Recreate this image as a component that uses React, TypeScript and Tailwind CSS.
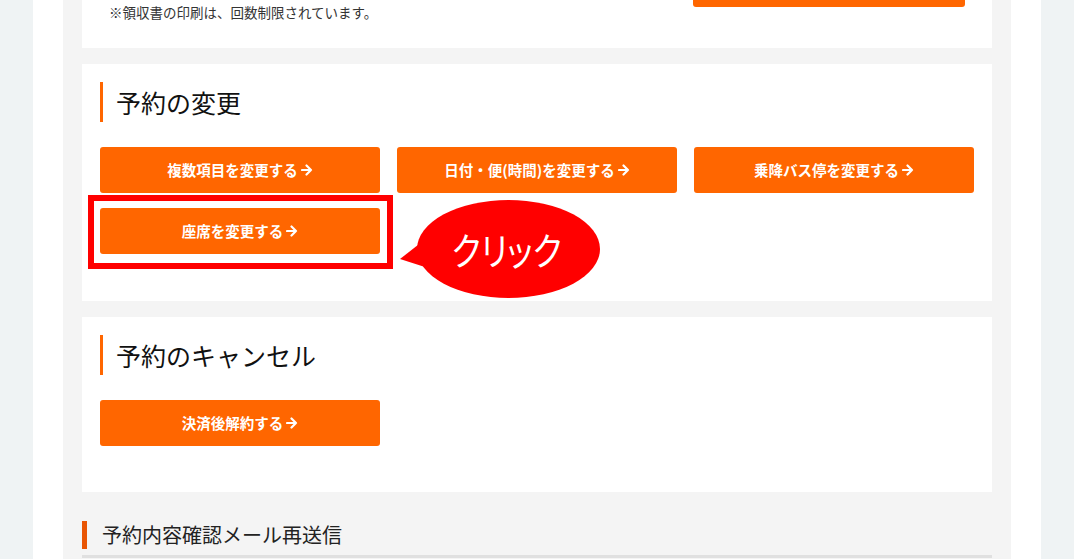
const jp = "font-['Noto_Sans_CJK_JP','Noto_Sans',sans-serif]";

const Arrow = () => (
  <svg width="12" height="12" viewBox="0 0 12 12" className="ml-[3px] shrink-0">
    <path
      d="M1 6h9M5.5 1.5l4.5 4.5-4.5 4.5"
      fill="none"
      stroke="white"
      strokeWidth="2.2"
      strokeLinecap="round"
      strokeLinejoin="round"
    />
  </svg>
);

const OrangeButton = ({ label }: { label: string }) => (
  <button
    type="button"
    className="flex h-[46px] w-[280px] items-center justify-center rounded-[3px] bg-[#ff6600] text-[14.5px] font-bold text-white"
  >
    {label}
    <Arrow />
  </button>
);

const Heading = ({ title }: { title: string }) => (
  <h2 className="flex h-[40px] items-center border-l-[3px] border-[#ff6600] pl-[13px] text-[25px] leading-none text-[#111]">
    {title}
  </h2>
);

// red balloon pointing at the highlighted button
const Callout = () => (
  <div className="pointer-events-none absolute left-[298px] top-[-12px] h-[104px] w-[204px]">
    <svg width="204" height="104" viewBox="0 0 204 104">
      <path d="M2 63 L25 45 L30 72 Z" fill="#ff0000" />
      <ellipse cx="110.5" cy="53" rx="91.5" ry="49" fill="#ff0000" />
    </svg>
    <span className="absolute inset-0 flex items-center justify-center pl-[14px] pt-[2px] text-white">
      <span className="inline-block scale-x-[0.85] text-[38px] leading-none [font-feature-settings:'palt']">
        クリック
      </span>
    </span>
  </div>
);

export default function App() {
  return (
    <div className={`h-[559px] overflow-hidden bg-[#eff3f4] ${jp}`}>
      <div className="ml-[33px] h-full w-[1008px] bg-white px-[30px]">
        <div className="h-full bg-[#f4f4f4] px-[19px]">
          <div className="flex flex-col gap-4">
            {/* receipt card, scrolled partly out of view */}
            <div className="-mt-[39px] flex h-[87px] justify-between bg-white pl-[27px] pr-[27px]">
              <p className="mt-[42px] text-[13.5px] leading-[19px] text-[#333]">
                ※領収書の印刷は、回数制限されています。
              </p>
              <div className="h-[46px] w-[272px] rounded-[3px] bg-[#ff6600]" />
            </div>

            <div className="bg-white px-[18px] pb-[47px] pt-[18px]">
              <Heading title="予約の変更" />
              <div className="mt-[25px] grid grid-cols-[280px_280px_280px] gap-x-[17px] gap-y-[15px]">
                <OrangeButton label="複数項目を変更する" />
                <OrangeButton label="日付・便(時間)を変更する" />
                <OrangeButton label="乗降バス停を変更する" />
                <div className="relative">
                  <OrangeButton label="座席を変更する" />
                  <div className="pointer-events-none absolute -bottom-[15px] -left-[12px] -right-[13px] -top-[13px] border-[6px] border-[#ff0000]" />
                  <Callout />
                </div>
              </div>
            </div>

            <div className="bg-white px-[18px] pb-[46px] pt-[18px]">
              <Heading title="予約のキャンセル" />
              <div className="mt-[25px]">
                <OrangeButton label="決済後解約する" />
              </div>
            </div>
          </div>

          <div className="mt-[29px]">
            <h3 className="flex h-[28px] items-center border-l-[5px] border-[#e95504] pl-[15px] text-[20px] leading-none text-[#222]">
              予約内容確認メール再送信
            </h3>
            <div className="mt-[6px] h-[3px] bg-[#e0e0e0]" />
          </div>
        </div>
      </div>
    </div>
  );
}
